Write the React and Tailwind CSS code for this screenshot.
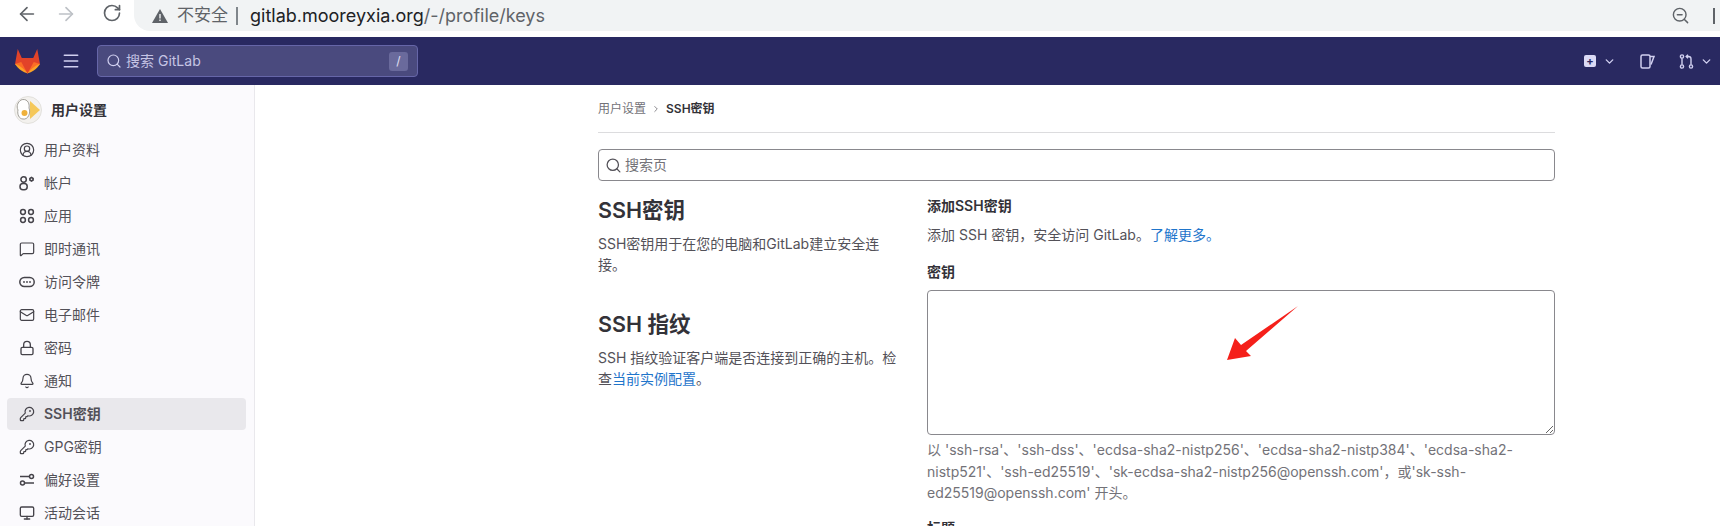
import React from 'react';
import { ArrowLeft, ArrowRight, RotateCw, ZoomOut, ChevronDown, ChevronRight, Search, CircleUserRound, MessageSquare, Mail, Lock, Bell, KeyRound, Monitor, Menu } from 'lucide-react';

const FONT = "font-['Inter','Noto_Sans_CJK_SC',sans-serif]";

const AccountIcon = () => (
    <svg width="16" height="16" viewBox="0 0 16 16" fill="none" stroke="currentColor" strokeWidth="1.5">
        <circle cx="4.6" cy="4.5" r="2.7" />
        <rect x="1" y="8.4" width="7.2" height="6.4" rx="3" />
        <path d="M12.5 1.5l2.4 1.4v2.7l-2.4 1.4-2.4-1.4V2.9z" fill="currentColor" stroke="none" />
        <circle cx="12.5" cy="4.2" r="0.8" fill="#fbfafd" stroke="none" />
    </svg>
);

const AppsIcon = () => (
    <svg width="16" height="16" viewBox="0 0 16 16" fill="none" stroke="currentColor" strokeWidth="1.5">
        <circle cx="4" cy="4" r="2.4" />
        <circle cx="12" cy="4" r="2.4" />
        <circle cx="4" cy="12" r="2.4" />
        <circle cx="12" cy="12" r="2.4" />
    </svg>
);

const TokenIcon = () => (
    <svg width="16" height="16" viewBox="0 0 16 16" fill="none" stroke="currentColor" strokeWidth="1.5">
        <rect x="0.8" y="3.5" width="14.4" height="9" rx="4.5" />
        <circle cx="5" cy="8" r="0.9" fill="currentColor" stroke="none" />
        <circle cx="8" cy="8" r="0.9" fill="currentColor" stroke="none" />
        <circle cx="11" cy="8" r="0.9" fill="currentColor" stroke="none" />
    </svg>
);

const PrefsIcon = () => (
    <svg width="16" height="16" viewBox="0 0 16 16" fill="none" stroke="currentColor" strokeWidth="1.5">
        <circle cx="12.5" cy="4.5" r="2" />
        <path d="M1 4.5h9" />
        <circle cx="3.5" cy="11" r="2" />
        <path d="M6 11h9" />
    </svg>
);

const Tanuki = () => (
    <svg width="27" height="26" viewBox="0 0 26 25">
        <path d="M13 24.5L1 15.5 3.6 1 7.5 9.5h11L22.4 1 25 15.5z" fill="#e24329" />
        <path d="M13 24.5L1 15.5l6 -2z" fill="#fc6d26" />
        <path d="M13 24.5l12-9-6-2z" fill="#fc6d26" />
        <path d="M1 15.5c3 .5 8 4 12 9-4-1-9-4-12-9z" fill="#fca326" />
        <path d="M25 15.5c-3 .5-8 4-12 9 4-1 9-4 12-9z" fill="#fca326" />
    </svg>
);

const Avatar = () => (
    <svg width="28" height="28" viewBox="0 0 28 28">
        <circle cx="14" cy="14" r="13.5" fill="#f3f1ee" stroke="#e2e0dc" />
        <path d="M16 5l10 9-10 9z" fill="#f5c85a" />
        <path d="M7 4c5-2 9 2 8 8 2 5-1 12-6 11-4 0-6-5-5-9-2-4 0-8 3-10z" fill="#ffffff" stroke="#8d8a84" strokeWidth="0.8" />
        <circle cx="10.5" cy="17" r="3" fill="#efb13b" />
    </svg>
);

const navItems = [
    { label: '用户资料', icon: <CircleUserRound size={16} strokeWidth={1.8} /> },
    { label: '帐户', icon: <AccountIcon /> },
    { label: '应用', icon: <AppsIcon /> },
    { label: '即时通讯', icon: <MessageSquare size={16} strokeWidth={1.8} /> },
    { label: '访问令牌', icon: <TokenIcon /> },
    { label: '电子邮件', icon: <Mail size={16} strokeWidth={1.8} /> },
    { label: '密码', icon: <Lock size={16} strokeWidth={2} /> },
    { label: '通知', icon: <Bell size={16} strokeWidth={1.8} /> },
    { label: 'SSH密钥', icon: <KeyRound size={16} strokeWidth={1.8} />, active: true },
    { label: 'GPG密钥', icon: <KeyRound size={16} strokeWidth={1.8} /> },
    { label: '偏好设置', icon: <PrefsIcon /> },
    { label: '活动会话', icon: <Monitor size={16} strokeWidth={2} /> },
];

const BrowserBar = () => (
    <div className="flex h-[37px] shrink-0 bg-white">
        <div className="flex w-[134px] shrink-0 items-start pt-[3px] pl-[16px] gap-[17px]">
            <ArrowLeft size={22} className="text-[#5f6368]" strokeWidth={1.8} />
            <ArrowRight size={22} className="text-[#bdc1c6]" strokeWidth={1.8} />
            <RotateCw size={20} className="text-[#5f6368] ml-[8px]" strokeWidth={2} />
        </div>
        <div className="flex h-[31px] flex-1 items-center rounded-bl-[16px] bg-[#f1f3f4] pl-[18px] pr-[30px]">
            <svg width="16" height="14" viewBox="0 0 16 14"><path d="M8 0l8 14H0z" fill="#5f6368" /><path d="M7.3 5h1.4v4.5H7.3zM7.3 10.5h1.4v1.4H7.3z" fill="#f1f3f4" /></svg>
            <span className="ml-[9px] text-[17px] text-[#5f6368]">不安全</span>
            <span className="ml-[8px] h-[18px] w-[2px] bg-[#80868b]"></span>
            <span className="ml-[12px] text-[18px] text-[#5f6368]"><span className="text-[#202124]">gitlab.mooreyxia.org</span>/-/profile/keys</span>
            <ZoomOut size={19} className="ml-auto text-[#5f6368] mr-[23px]" strokeWidth={1.8} />
            <span className="h-[16px] w-[7px] shrink-0 -mr-[30px] border-l-2 border-[#5f6368]"></span>
        </div>
    </div>
);

const TopNav = () => (
    <div className="flex h-[48px] shrink-0 items-center bg-[#292961] text-[#d1d0f0]">
        <div className="ml-[14px]"><Tanuki /></div>
        <Menu size={20} className="ml-[20px]" strokeWidth={1.8} />
        <div className="ml-[16px] flex h-[32px] w-[321px] items-center rounded border border-[#6666a8] bg-[#4a4a7e] px-[8px]">
            <Search size={16} strokeWidth={1.8} />
            <span className="ml-[4px] text-sm text-[#c5c4e4]">搜索 GitLab</span>
            <span className="ml-auto mr-[1px] flex h-[19px] w-[19px] items-center justify-center rounded-[3px] bg-[#6a6a9c] text-xs text-[#e2e1f5]">/</span>
        </div>
        <div className="ml-auto flex items-center">
            <span className="flex h-[12px] w-[12px] items-center justify-center rounded-[2px] bg-[#dbdaf5] text-[11px] font-bold leading-none text-[#292961]">+</span>
            <ChevronDown size={13} className="ml-[7px]" strokeWidth={2.5} />
            <svg className="ml-[24px]" width="15" height="15" viewBox="0 0 15 15" fill="none" stroke="currentColor" strokeWidth="1.5">
                <rect x="1" y="1" width="9" height="13" rx="1.5" />
                <path d="M10 2.5h4l-3 8" />
            </svg>
            <svg className="ml-[24px]" width="15" height="15" viewBox="0 0 15 15" fill="none" stroke="currentColor" strokeWidth="1.4">
                <circle cx="3" cy="2.5" r="1.6" />
                <circle cx="3" cy="12.5" r="1.6" />
                <circle cx="12" cy="12.5" r="1.6" />
                <path d="M3 4.2v6.6M12 10.8V5c0-1.5-1-2.5-2.5-2.5H7.5M9 .8L7.2 2.5 9 4.2" />
            </svg>
            <ChevronDown size={13} className="ml-[6px] mr-[7px]" strokeWidth={2.5} />
        </div>
    </div>
);

const Sidebar = () => (
    <aside className="w-[255px] shrink-0 overflow-hidden border-r border-[#e9e8ec] bg-[#fbfafd] px-[7px]">
        <div className="flex h-[49px] items-center pl-[7px] pt-[1px]">
            <Avatar />
            <span className="ml-[9px] text-sm font-semibold text-[#333238]">用户设置</span>
        </div>
        <div className="flex flex-col gap-[1px]">
            {navItems.map(item => (
                <div
                    key={item.label}
                    className={`flex h-[32px] w-[239px] shrink-0 items-center gap-[9px] rounded-[4px] pl-[12px] text-sm text-[#535158] ${
                        item.active ? 'bg-[#e9e8ec] font-semibold text-[#333238]' : ''
                    }`}
                >
                    <span className="flex w-[16px] shrink-0 items-center text-[#45434a]">{item.icon}</span>
                    {item.label}
                </div>
            ))}
        </div>
    </aside>
);

const Content = () => (
    <main className="relative flex-1 overflow-hidden pl-[343px]">
        <div className="w-[957px]">
            <div className="flex h-[48px] items-center border-b border-[#dcdcde] text-xs text-[#737278]">
                用户设置
                <ChevronRight size={10} className="mx-[5px]" />
                <span className="font-semibold text-[#333238]">SSH密钥</span>
            </div>
            <div className="mt-[16px] flex h-[32px] items-center rounded border border-[#89888d] px-[8px]">
                <Search size={17} className="-ml-[2px] text-[#535158]" strokeWidth={1.8} />
                <span className="ml-[3px] text-sm text-[#737278]">搜索页</span>
            </div>
            <div className="mt-[15px] grid grid-cols-[306px_628px] gap-[23px]">
                <div>
                    <h2 className="text-[21.5px] leading-[28px] font-semibold text-[#333238]">SSH密钥</h2>
                    <p className="mt-[9px] text-sm leading-[21px] text-[#535158]">SSH密钥用于在您的电脑和GitLab建立安全连接。</p>
                    <h2 className="mt-[35px] text-[21.5px] leading-[28px] font-semibold text-[#333238]">SSH 指纹</h2>
                    <p className="mt-[9px] text-sm leading-[21px] text-[#535158]">
                        SSH 指纹验证客户端是否连接到正确的主机。检查<span className="text-[#1f75cb]">当前实例配置</span>。
                    </p>
                </div>
                <div>
                    <div className="text-sm leading-[20px] font-semibold text-[#333238]">添加SSH密钥</div>
                    <p className="mt-[9px] text-sm leading-[20px] text-[#535158]">添加 SSH 密钥，安全访问 GitLab。<span className="text-[#1f75cb]">了解更多。</span></p>
                    <div className="mt-[17px] text-sm leading-[20px] font-semibold text-[#333238]">密钥</div>
                    <textarea className="mt-[8px] block h-[145px] w-full rounded border border-[#89888d] bg-white outline-none"></textarea>
                    <p className="mt-[4px] text-sm leading-[21.5px] text-[#737278]">
                        以 'ssh-rsa'、'ssh-dss'、'ecdsa-sha2-nistp256'、'ecdsa-sha2-nistp384'、'ecdsa-sha2-nistp521'、'ssh-ed25519'、'sk-ecdsa-sha2-nistp256@openssh.com'，或'sk-ssh-ed25519@openssh.com' 开头。
                    </p>
                    <div className="mt-[14px] text-sm leading-[20px] font-semibold text-[#333238]">标题</div>
                </div>
            </div>
        </div>
        {/* red annotation arrow drawn over the textarea */}
        <svg className="absolute left-[970px] top-[220px]" width="76" height="56" viewBox="0 0 76 56">
            <path d="M73 1L21 46l5 5L2 55l8-22 6 7z" fill="#f5201a" />
        </svg>
    </main>
);

const App = () => {
    return (
        <div className={`flex h-[526px] w-[1720px] flex-col overflow-hidden bg-white ${FONT}`}>
            <BrowserBar />
            <TopNav />
            <div className="flex min-h-0 flex-1">
                <Sidebar />
                <Content />
            </div>
        </div>
    );
};

export default App;
